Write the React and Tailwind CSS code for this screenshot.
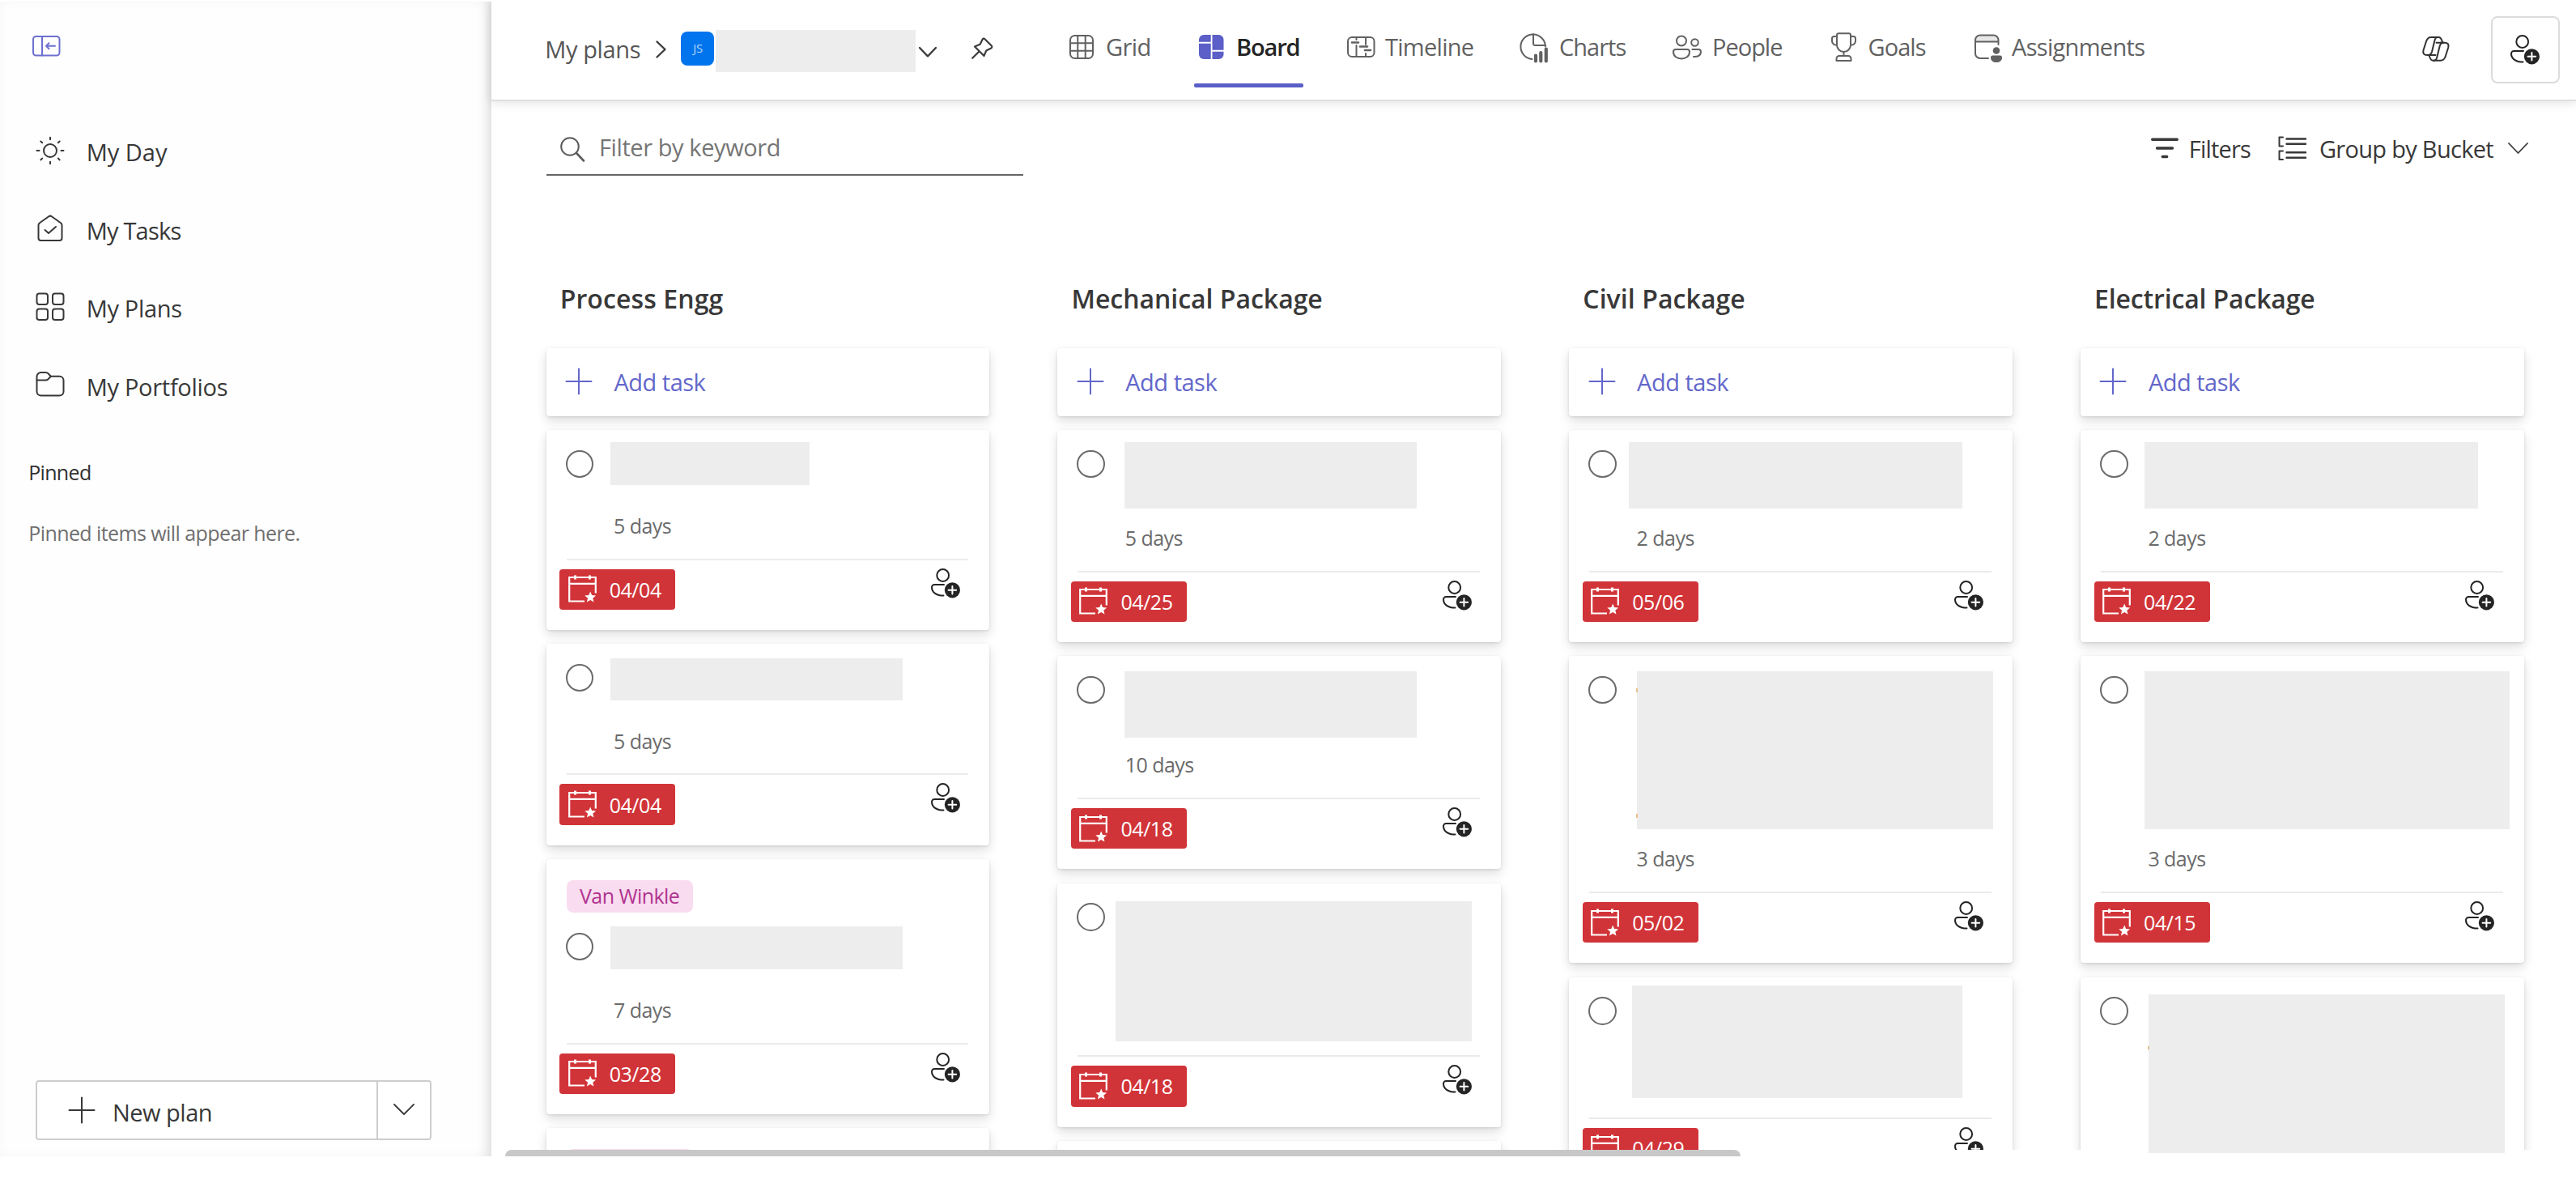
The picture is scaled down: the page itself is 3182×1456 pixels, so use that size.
import React from "react";

function Icon({ w, h, className = "", children, sw = 2 }) {
  return (
    <svg
      width={w}
      height={h}
      viewBox={`0 0 ${w} ${h}`}
      fill="none"
      stroke="currentColor"
      strokeWidth={sw}
      strokeLinecap="round"
      strokeLinejoin="round"
      className={"block shrink-0 overflow-visible " + className}
    >
      {children}
    </svg>
  );
}

const CollapseIcon = () => (
  <Icon w={35} h={26} className="text-[#6d70d0]">
    <rect x="1" y="1" width="32.5" height="23.5" rx="3.5" />
    <path d="M12 1v23.500M28 12.700H17M20.500 9.200 17 12.700l3.500 3.500" />
  </Icon>
);

const SunIcon = () => (
  <Icon w={36} h={36}>
    <circle cx="18" cy="18" r="8" />
    <path d="M18 1.800v2.400M18 31.800v2.400M1.500 18h3M31.500 18h3M6.300 6.500l1.900 1.800M27.800 27.600l1.900 1.800M29.700 6.500l-1.900 1.800M8.200 27.600l-1.900 1.800" />
  </Icon>
);

const HomeCheckIcon = () => (
  <Icon w={36} h={36}>
    <path d="M16.300 2.200a3 3 0 0 1 3.400 0L31 10.300a3.400 3.400 0 0 1 1.500 2.800V29a3 3 0 0 1-3 3h-23a3 3 0 0 1-3-3V13.100A3.400 3.400 0 0 1 5 10.300Z" />
    <path d="m11.500 19 4.500 4 9-8" />
  </Icon>
);

const PlansIcon = () => (
  <Icon w={36} h={36}>
    <rect x="1.500" y="1.500" width="13.500" height="13.500" rx="3" />
    <rect x="21" y="1.500" width="13.500" height="13.500" rx="3" />
    <rect x="1.500" y="20.500" width="13.500" height="13.500" rx="3" />
    <rect x="21" y="20.500" width="13.500" height="13.500" rx="3" />
  </Icon>
);

const FolderIcon = () => (
  <Icon w={36} h={36}>
    <path d="M1.500 8V7a5 5 0 0 1 5-5h5.800c1.300 0 2.300.400 3.200 1.300L18.800 6.800H29.500a5 5 0 0 1 5 5V25.500a5 5 0 0 1-5 5h-23a5 5 0 0 1-5-5Z" />
    <path d="M1.500 11.600h10.800c1.300 0 2.300-.400 3.200-1.300L18.800 6.800" />
  </Icon>
);

const Plus = ({ className }) => (
  <Icon w={32} h={32} className={className}>
    <path d="M16 .500v31M.500 16h31" />
  </Icon>
);

const GridIcon = () => (
  <Icon w={34} h={40}>
    <rect x="1" y="5" width="28" height="28" rx="5.500" />
    <path d="M10.300 5v28M19.700 5v28M1 14.300h28M1 23.700h28" />
  </Icon>
);

const BoardIcon = () => (
  <Icon w={34} h={40} className="text-[#5b5fc7]" sw={0}>
    <g fill="#5b5fc7">
      <path d="M6 4h8.700v8.800H0V10a6 6 0 0 1 6-6Z" />
      <path d="M0 14.800h14.700V34H6a6 6 0 0 1-6-6Z" />
      <path d="M16.500 4H24.500a6 6 0 0 1 6 6v12.800h-14Z" />
      <path d="M16.500 24.800h14V28a6 6 0 0 1-6 6h-8Z" />
    </g>
  </Icon>
);

const TimelineIcon = () => (
  <Icon w={36} h={40}>
    <rect x="1" y="7" width="32.500" height="24" rx="5" />
    <path d="M11.500 7v3M11.500 17v14M23 7v9M23 27v4" />
    <path d="M6 13.500h8M16 18.500h9M22 23h7" strokeWidth="2.600" />
  </Icon>
);

const ChartsIcon = () => (
  <Icon w={36} h={40}>
    <path d="M14.500 34A15.300 15.300 0 1 1 31 18.500" />
    <path d="M16 3v11.500a2.500 2.500 0 0 0 2.500 2.500H31" />
    <path d="M19 29.500v7M25.300 26v10.500M31.800 21.500v15" strokeWidth="4.200" />
  </Icon>
);

const PeopleIcon = () => (
  <Icon w={38} h={40}>
    <circle cx="11" cy="11.500" r="6" />
    <circle cx="27.500" cy="13.500" r="4.300" />
    <path d="M4 22h14a3 3 0 0 1 3 3c0 5.500-4.500 8.500-10 8.500S1 30.500 1 25a3 3 0 0 1 3-3Z" />
    <path d="M24.500 22h7.500a3 3 0 0 1 3 3c0 4.500-4 6.500-9 6" />
  </Icon>
);

const GoalsIcon = () => (
  <Icon w={34} h={40}>
    <path d="M7 4.500a2.300 2.300 0 0 1 2.300-2.300h12.400A2.300 2.300 0 0 1 24 4.500V16.500a8.500 8.500 0 0 1-17 0Z" />
    <path d="M7 6H3.500a2.500 2.500 0 0 0-2.500 2.500v3A5 5 0 0 0 7 16.500M24 6h3.500A2.500 2.500 0 0 1 30 8.500v3a5 5 0 0 1-6 5M15.500 25v5M6.500 36v-2.500a3.500 3.500 0 0 1 3.500-3.500h11a3.500 3.500 0 0 1 3.500 3.500V36Z" />
  </Icon>
);

const AssignmentsIcon = () => (
  <Icon w={36} h={40}>
    <path d="M17 33H7a6 6 0 0 1-6-6V10.500a6 6 0 0 1 6-6H23.500a6 6 0 0 1 6 6V16M1 12.500h28.500" />
    <path d="M1 10.500a6 6 0 0 1 6-6H23.500a6 6 0 0 1 6 6v2H1Z" fill="currentColor" fillOpacity="0.150" stroke="none" />
    <circle cx="27" cy="23.500" r="4.300" fill="currentColor" stroke="none" />
    <path d="M22.500 29.500h9a2.500 2.500 0 0 1 2.500 2.500c0 4-3 6-7 6s-7-2-7-6a2.500 2.500 0 0 1 2.500-2.500Z" fill="currentColor" stroke="none" />
  </Icon>
);

const CopilotIcon = () => (
  <Icon w={34} h={31}>
    <path d="M19 1h-8C7.500 1 6 3 5 6L1.500 17c-1 4 .500 6 4.500 6h5" />
    <path d="M14.700 29.700h8c3.500 0 5-2 6-5l3.500-11c1-4-.500-6-4.500-6h-5" />
    <path d="M19 1c-2 0-3 1.500-3.600 4L12 19c-.700 2.500-2.500 4-5 4" />
    <path d="M14.700 29.700c2 0 3-1.500 3.600-4l3.400-14c.700-2.500 2.500-4 5-4" />
    <path d="M18.500 1h2c3 0 3.500 3 4.800 6.700M15.200 29.700h-2c-3 0-3.500-3-4.800-6.700M17.500 7.700h6M10.500 23h6" />
  </Icon>
);

const PersonAddIcon = () => (
  <Icon w={37} h={37} className="text-[#242424]">
    <circle cx="14.700" cy="8.500" r="7.400" />
    <path d="M16 20H4.300A3.300 3.300 0 0 0 1 23.300c0 6.500 6 10.300 14.500 10.300" />
    <circle cx="26.400" cy="26.800" r="9.600" fill="currentColor" stroke="none" />
    <path d="M26.400 22v9.600M21.600 26.800h9.600" stroke="#fff" strokeWidth="2" />
  </Icon>
);

const CalendarStarIcon = () => (
  <Icon w={36} h={35} className="text-white" sw={2.2}>
    <path d="M20 32.500H1.200V3h32.600v19.500M1.200 10.800h32.600" strokeLinecap="butt" strokeLinejoin="miter" />
    <path d="M8.500.500v5M26.500.500v5" strokeWidth="3" strokeLinecap="butt" />
    <path d="m27.200 20.500 1.900 4.600 5 .400-3.800 3.200 1.200 4.900-4.300-2.700-4.300 2.700 1.200-4.900-3.800-3.200 5-.400Z" fill="currentColor" stroke="none" />
  </Icon>
);

const NAV = [
  { label: "My Day", icon: <SunIcon />, ls: "" },
  { label: "My Tasks", icon: <HomeCheckIcon />, ls: "tracking-[-0.8px]" },
  { label: "My Plans", icon: <PlansIcon />, ls: "tracking-[-0.330px]" },
  { label: "My Portfolios", icon: <FolderIcon />, ls: "tracking-[-0.290px]" },
];

const TABS = [
  { label: "Grid", icon: <GridIcon />, tab: "w-[159.500px]", slot: "w-[44.500px]", ls: "tracking-[-0.590px]" },
  { label: "Board", icon: <BoardIcon />, tab: "w-[183.500px]", slot: "w-[46px]", ls: "tracking-[-1.160px]", active: true },
  { label: "Timeline", icon: <TimelineIcon />, tab: "w-[214px]", slot: "w-[46.500px]", ls: "tracking-[-0.720px]" },
  { label: "Charts", icon: <ChartsIcon />, tab: "w-[188px]", slot: "w-[47.500px]", ls: "tracking-[-0.990px]" },
  { label: "People", icon: <PeopleIcon />, tab: "w-[196px]", slot: "w-[48.500px]", ls: "tracking-[-1.010px]" },
  { label: "Goals", icon: <GoalsIcon />, tab: "w-[177px]", slot: "w-[45px]", ls: "tracking-[-0.940px]" },
  { label: "Assignments", icon: <AssignmentsIcon />, tab: "w-[220px]", slot: "w-[45.500px]", ls: "tracking-[-0.690px]" },
];

// Title block geometry is the masked area covering each task's name.
const COLUMNS = [
  {
    title: "Process Engg",
    ls: "tracking-[0.100px]",
    cards: [
      { size: "h-[247px]", mask: "ml-[20.700px] mt-[15px] w-[246.500px] h-[52.500px]", days: "5 days", date: "04/04" },
      { size: "h-[248.500px]", mask: "ml-[20.700px] mt-[18px] w-[361.500px] h-[52px]", days: "5 days", date: "04/04" },
      { size: "h-[315px]", tag: "Van Winkle", mask: "ml-[20.700px] mt-[17px] w-[361.500px] h-[52.500px]", days: "7 days", date: "03/28" },
      { size: "h-[315px]", tag: " ", mask: "ml-[20.700px] mt-[17px] w-[361.500px] h-[52.500px]", days: "", date: "" },
    ],
  },
  {
    title: "Mechanical Package",
    ls: "tracking-[-0.030px]",
    cards: [
      { size: "h-[262px]", mask: "ml-[23.700px] mt-[15px] w-[361px] h-[82px]", days: "5 days", date: "04/25" },
      { size: "h-[263px]", mask: "ml-[23.700px] mt-[19px] w-[361px] h-[81.500px]", days: "10 days", date: "04/18" },
      { size: "h-[301px]", mask: "ml-[13.500px] mt-[22.500px] w-[440px] h-[172.500px]", days: "", date: "04/18" },
      { size: "h-[300px]", mask: "ml-[24px] mt-[60px] w-[360px] h-[80px]", days: "", date: "" },
    ],
  },
  {
    title: "Civil Package",
    ls: "tracking-[0.070px]",
    cards: [
      { size: "h-[262px]", mask: "ml-[15.300px] mt-[15px] w-[412px] h-[82px]", days: "2 days", date: "05/06" },
      { size: "h-[379px]", mask: "ml-[25.700px] mt-[19px] w-[440px] h-[195px]", days: "3 days", date: "05/02", specks: ["top-[21px] left-0 h-[5px]", "top-[176px] left-0 h-[5px]"] },
      { size: "h-[262px]", mask: "ml-[19.300px] mt-[10px] w-[407.500px] h-[139px]", days: "", date: "04/29" },
    ],
  },
  {
    title: "Electrical Package",
    ls: "tracking-[-0.160px]",
    cards: [
      { size: "h-[262px]", mask: "ml-[20.500px] mt-[15px] w-[411.500px] h-[82px]", days: "2 days", date: "04/22" },
      { size: "h-[379px]", mask: "ml-[20.500px] mt-[19px] w-[450.500px] h-[195px]", days: "3 days", date: "04/15" },
      { size: "h-[330px]", mask: "ml-[25.500px] mt-[21px] w-[440px] h-[260px]", days: "", date: "", specks: ["top-[64px] left-0 h-[4px]"] },
    ],
  },
];

const SHADOW = "shadow-[0_6px_13.500px_rgba(0,0,0,0.132),0_1px_3.500px_rgba(0,0,0,0.108)]";

function TaskCard({ card }) {
  return (
    <div className={`flex shrink-0 flex-col rounded-[4px] bg-white ${SHADOW} ${card.size}`}>
      {card.tag && (
        <div className="ml-[25px] mt-[26px] flex h-[40px] w-[156px] shrink-0 items-center justify-center rounded-[8px] bg-[#f9dcef] text-[25px] tracking-[-0.550px] text-[#b0338f]">
          {card.tag}
        </div>
      )}
      <div className="flex shrink-0 items-start">
        <div className="ml-[24px] mt-[24.500px] size-[34.500px] shrink-0 rounded-full border-2 border-[#6b6b6b]" />
        <div className={`relative shrink-0 bg-[#ededed] ${card.mask}`}>
          {(card.specks || []).map((s) => (
            <span key={s} className={`absolute w-[1.500px] -translate-x-px bg-[#e8c08c] ${s}`} />
          ))}
        </div>
      </div>
      {card.date && (
        <div className="mt-auto flex flex-col pb-[25px]">
          {card.days && (
            <div className="-mt-[34px] mb-[23.500px] h-[34px] pl-[83.300px] text-[25px] leading-[34px] tracking-[-0.540px] text-[#6b6b6b]">
              {card.days}
            </div>
          )}
          <div className="ml-[25px] mr-[26px] h-[2px] bg-[#ebebeb]" />
          <div className="mt-[11px] flex items-start">
            <div className="ml-[16.500px] flex h-[50.500px] w-[143px] items-center rounded-[4px] bg-[#d13438] pl-[10.500px]">
              <CalendarStarIcon />
              <span className="ml-[15px] text-[25px] leading-[34px] tracking-[-0.460px] text-white">{card.date}</span>
            </div>
            <div className="-mt-px ml-auto mr-[35.500px]">
              <PersonAddIcon />
            </div>
          </div>
        </div>
      )}
    </div>
  );
}

function Sidebar() {
  return (
    <aside className="flex h-[1426px] w-[607px] shrink-0 flex-col bg-[#fefefe] shadow-[inset_-16px_0_16px_-12px_rgba(0,0,0,0.130),inset_0_0_14px_rgba(0,0,0,0.030)]">
      <div className="ml-[40px] mt-[42px]">
        <CollapseIcon />
      </div>
      <nav className="mt-[69px] flex flex-col">
        {NAV.map((n) => (
          <div key={n.label} className="flex h-[96.700px] items-center text-[#383838]">
            <div className="-mt-[3px] ml-[44px] w-[62.700px]">{n.icon}</div>
            <span className={`pt-px text-[29px] leading-[40px] ${n.ls}`}>{n.label}</span>
          </div>
        ))}
      </nav>
      <div className="ml-[35.200px] mt-[40.500px] text-[25px] leading-[34px] tracking-[-0.670px] text-[#303030]">Pinned</div>
      <div className="ml-[35.200px] mt-[41px] text-[25px] leading-[34px] tracking-[-0.580px] text-[#6f6f6f]">
        Pinned items will appear here.
      </div>
      <div className="mb-[20px] ml-[44px] mt-auto flex h-[74px] w-[489px] rounded-[4px] border-2 border-[#cdcdcd] bg-white text-[#383838]">
        <div className="flex flex-1 items-center border-r-2 border-[#cdcdcd] pl-[38.500px]">
          <Plus />
          <span className="ml-[22.500px] pt-[5px] text-[29px] leading-[40px] tracking-[-0.510px]">New plan</span>
        </div>
        <div className="flex w-[64px] items-center justify-center">
          <Icon w={26} h={14} sw={1.8} className="-ml-px -mt-[2px]">
            <path d="m1 1 12 12L25 1" />
          </Icon>
        </div>
      </div>
    </aside>
  );
}

function Header() {
  return (
    <header className="relative flex h-[123px] shrink-0 items-start border-b-2 border-[#dfdfdf] bg-white shadow-[0_2px_12px_rgba(0,0,0,0.120)]">
      <span className="ml-[66.300px] mt-[39px] w-[136.700px] text-[29px] leading-[40px] tracking-[-0.390px] text-[#565656]">
        My plans
      </span>
      <Icon w={13} h={22} sw={2.4} className="mt-[48px] text-[#3b3b3b]">
        <path d="m1.500 1.500 10 9.500-10 9.500" />
      </Icon>
      <div className="ml-[18.500px] mt-[36.500px] flex h-[42px] w-[41px] items-center justify-center rounded-[8px] bg-[#0074ed] text-[15px] tracking-[-0.300px] text-white/70">
        JS
      </div>
      <div className="ml-[2px] mt-[35px] h-[52px] w-[246.500px] bg-[#ededed]" />
      <Icon w={22} h={13} sw={2.4} className="ml-[4.500px] mt-[56px] text-[#3b3b3b]">
        <path d="m1 1 10 10.500L21 1" />
      </Icon>
      <Icon w={27} h={27} sw={2.2} className="ml-[43px] mt-[44px] text-[#3b3b3b]">
        <path d="M16.500 2.200 24.800 10.500a1.800 1.800 0 0 1-.500 2.900l-6 3-2.800 6.600L4 11.500l6.600-2.800 3-6a1.800 1.800 0 0 1 2.900-.500ZM9.500 17.500 1.200 25.800" />
      </Icon>
      <div className="ml-[94px] flex">
        {TABS.map((t) => (
          <div key={t.label} className={`relative flex items-start text-[#616161] ${t.tab}`}>
            <div className={`mt-[37px] shrink-0 ${t.slot}`}>{t.icon}</div>
            <span className={`mt-[35.500px] text-[29px] leading-[40px] ${t.ls} ${t.active ? "font-semibold text-[#242424]" : ""}`}>
              {t.label}
            </span>
            {t.active && <div className="absolute -left-[6px] top-[100.500px] h-[5px] w-[135px] rounded-[2px] bg-[#5b5fc7]" />}
          </div>
        ))}
      </div>
      <div className="ml-auto mr-[51px] mt-[43px] text-[#323232]">
        <CopilotIcon />
      </div>
      <div className="mr-[20.500px] mt-[18px] flex h-[83px] w-[84.500px] items-center justify-center rounded-[8px] border-2 border-[#dcdcdc]">
        <PersonAddIcon />
      </div>
    </header>
  );
}

function Toolbar() {
  return (
    <div className="flex h-[92px] shrink-0 items-start pl-[67.500px]">
      <div className="flex h-[92px] w-[589px] items-start border-b-2 border-[#666666]">
        <Icon w={30} h={31} className="ml-[17.500px] mt-[44px] text-[#5c5c5c]">
          <circle cx="12" cy="12" r="10.800" />
          <path d="m20 20 9 9.500" strokeWidth="2.600" />
        </Icon>
        <span className="ml-[18px] mt-[37px] text-[29px] leading-[40px] tracking-[-0.410px] text-[#757575]">Filter by keyword</span>
      </div>
      <div className="ml-auto flex items-start text-[#383838]">
        <Icon w={34} h={28} sw={3.4} className="mt-[44px]">
          <path d="M1.700 3.300h30.600M7.500 14h19M14.300 24.500h5.400" />
        </Icon>
        <span className="ml-[13.300px] mt-[39px] w-[109.700px] text-[29px] leading-[40px] tracking-[-0.810px]">Filters</span>
        <Icon w={35} h={31} sw={2.4} className="mt-[42.500px]">
          <path d="M10.500 3.500H34M10.500 9.800H34M10.500 20.200H34M10.500 26.700H34" />
          <path d="M6 1.500H1.500v11H6M6 18.500H1.500v10.500H6" strokeWidth="2" />
        </Icon>
        <span className="ml-[16.500px] mt-[39px] w-[233px] text-[29px] leading-[40px] tracking-[-0.710px]">Group by Bucket</span>
        <Icon w={25} h={14} sw={1.8} className="mr-[59px] mt-[51px]">
          <path d="m1 1 11.500 12L24 1" />
        </Icon>
      </div>
    </div>
  );
}

export default function App() {
  return (
    <div className="h-[1456px] w-[3182px] overflow-hidden bg-white pt-[2px] font-['Open_Sans','Noto_Sans',sans-serif]">
      <div className="flex h-[1426px] overflow-hidden">
        <Sidebar />
        <main className="flex min-w-0 flex-1 flex-col">
          <Header />
          <Toolbar />
          <div className="flex min-h-0 flex-1 gap-[84px] overflow-hidden pl-[67.700px]">
            {COLUMNS.map((col) => (
              <section key={col.title} className="flex w-[547.800px] shrink-0 flex-col">
                <h2 className={`ml-[17px] mt-[130px] h-[44px] text-[32px] font-semibold leading-[44px] text-[#383838] ${col.ls}`}>
                  {col.title}
                </h2>
                <button className={`mt-[38.500px] flex h-[84px] shrink-0 items-center rounded-[4px] bg-white pl-[24.300px] text-[#6367ca] ${SHADOW}`}>
                  <Plus className="-mt-px" />
                  <span className="ml-[27.500px] pt-px text-[29px] leading-[40px] tracking-[-0.500px]">Add task</span>
                </button>
                <div className="mt-[17.500px] flex flex-col gap-[17.300px]">
                  {col.cards.map((c, i) => (
                    <TaskCard key={i} card={c} />
                  ))}
                </div>
              </section>
            ))}
          </div>
          <div className="flex h-[8px] shrink-0 items-start bg-white">
            <div className="ml-[17px] h-[8px] w-[1526px] rounded-t-[8px] bg-[#c8c8c8]" />
            <div className="ml-[504px] h-[4px] w-[440px] bg-[#ededed]" />
          </div>
        </main>
      </div>
    </div>
  );
}
